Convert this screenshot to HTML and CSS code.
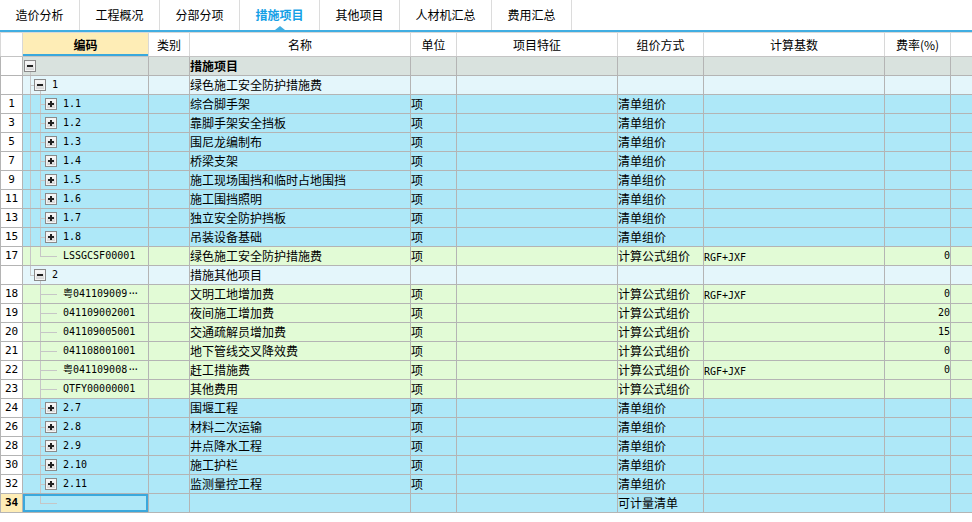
FILE: index.html
```html
<!DOCTYPE html>
<html>
<head>
    <meta charset="utf-8">
    <title>措施项目</title>

    <link rel="stylesheet" href="styles.css">
</head>
<body>
<div class="tabs">
    <div class="tab">造价分析</div>
    <div class="tab">工程概况</div>
    <div class="tab">分部分项</div>
    <div class="tab tab-active">措施项目</div>
    <div class="tab">其他项目</div>
    <div class="tab tab-wide">人材机汇总</div>
    <div class="tab">费用汇总</div>
</div>
<table class="grid">
    <colgroup>
        <col class="w-num">
        <col class="w-code">
        <col class="w-kind">
        <col class="w-name">
        <col class="w-unit">
        <col class="w-feat">
        <col class="w-mode">
        <col class="w-base">
        <col class="w-rate">
        <col class="w-rest">
    </colgroup>
    <thead>
    <tr>
        <th class="num"></th>
        <th class="h-code">编码</th>
        <th>类别</th>
        <th>名称</th>
        <th>单位</th>
        <th>项目特征</th>
        <th>组价方式</th>
        <th>计算基数</th>
        <th>费率(%)</th>
        <th></th>
    </tr>
    </thead>
    <tbody>
    <tr class="r-root">
        <td class="num"></td>
        <td class="t-root"><div class="node node-0"><span class="box"></span></div></td>
        <td></td><td class="txt"><b>措施项目</b></td><td></td><td></td><td></td><td></td><td></td><td></td>
    </tr>
    <tr class="r-group">
        <td class="num"></td>
        <td class="t-g1"><div class="node node-1"><span class="box"></span><span class="code">1</span></div></td>
        <td></td><td class="txt">绿色施工安全防护措施费</td><td></td><td></td><td></td><td></td><td></td><td></td>
    </tr>
    <tr class="r-list">
        <td class="num">1</td>
        <td class="t-l1"><div class="node node-2"><span class="box plus"></span><span class="code">1.1</span></div></td>
        <td></td><td class="txt">综合脚手架</td><td class="txt">项</td><td></td><td class="txt">清单组价</td><td></td><td></td><td></td>
    </tr>
    <tr class="r-list">
        <td class="num">3</td>
        <td class="t-l1"><div class="node node-2"><span class="box plus"></span><span class="code">1.2</span></div></td>
        <td></td><td class="txt">靠脚手架安全挡板</td><td class="txt">项</td><td></td><td class="txt">清单组价</td><td></td><td></td><td></td>
    </tr>
    <tr class="r-list">
        <td class="num">5</td>
        <td class="t-l1"><div class="node node-2"><span class="box plus"></span><span class="code">1.3</span></div></td>
        <td></td><td class="txt">围尼龙编制布</td><td class="txt">项</td><td></td><td class="txt">清单组价</td><td></td><td></td><td></td>
    </tr>
    <tr class="r-list">
        <td class="num">7</td>
        <td class="t-l1"><div class="node node-2"><span class="box plus"></span><span class="code">1.4</span></div></td>
        <td></td><td class="txt">桥梁支架</td><td class="txt">项</td><td></td><td class="txt">清单组价</td><td></td><td></td><td></td>
    </tr>
    <tr class="r-list">
        <td class="num">9</td>
        <td class="t-l1"><div class="node node-2"><span class="box plus"></span><span class="code">1.5</span></div></td>
        <td></td><td class="txt">施工现场围挡和临时占地围挡</td><td class="txt">项</td><td></td><td class="txt">清单组价</td><td></td><td></td><td></td>
    </tr>
    <tr class="r-list">
        <td class="num">11</td>
        <td class="t-l1"><div class="node node-2"><span class="box plus"></span><span class="code">1.6</span></div></td>
        <td></td><td class="txt">施工围挡照明</td><td class="txt">项</td><td></td><td class="txt">清单组价</td><td></td><td></td><td></td>
    </tr>
    <tr class="r-list">
        <td class="num">13</td>
        <td class="t-l1"><div class="node node-2"><span class="box plus"></span><span class="code">1.7</span></div></td>
        <td></td><td class="txt">独立安全防护挡板</td><td class="txt">项</td><td></td><td class="txt">清单组价</td><td></td><td></td><td></td>
    </tr>
    <tr class="r-list">
        <td class="num">15</td>
        <td class="t-l1"><div class="node node-2"><span class="box plus"></span><span class="code">1.8</span></div></td>
        <td></td><td class="txt">吊装设备基础</td><td class="txt">项</td><td></td><td class="txt">清单组价</td><td></td><td></td><td></td>
    </tr>
    <tr class="r-item">
        <td class="num">17</td>
        <td class="t-e1"><div class="node node-leaf"><span class="code">LSSGCSF00001</span></div></td>
        <td></td><td class="txt">绿色施工安全防护措施费</td><td class="txt">项</td><td></td><td class="txt">计算公式组价</td><td class="txt"><span class="code">RGF+JXF</span></td><td class="val">0</td><td></td>
    </tr>
    <tr class="r-group">
        <td class="num"></td>
        <td class="t-g2"><div class="node node-1"><span class="box"></span><span class="code">2</span></div></td>
        <td></td><td class="txt">措施其他项目</td><td></td><td></td><td></td><td></td><td></td><td></td>
    </tr>
    <tr class="r-item">
        <td class="num">18</td>
        <td class="t-i2"><div class="node node-leaf"><span class="code">粤041109009<span class="more">···</span></span></div></td>
        <td></td><td class="txt">文明工地增加费</td><td class="txt">项</td><td></td><td class="txt">计算公式组价</td><td class="txt"><span class="code">RGF+JXF</span></td><td class="val">0</td><td></td>
    </tr>
    <tr class="r-item">
        <td class="num">19</td>
        <td class="t-i2"><div class="node node-leaf"><span class="code">041109002001</span></div></td>
        <td></td><td class="txt">夜间施工增加费</td><td class="txt">项</td><td></td><td class="txt">计算公式组价</td><td></td><td class="val">20</td><td></td>
    </tr>
    <tr class="r-item">
        <td class="num">20</td>
        <td class="t-i2"><div class="node node-leaf"><span class="code">041109005001</span></div></td>
        <td></td><td class="txt">交通疏解员增加费</td><td class="txt">项</td><td></td><td class="txt">计算公式组价</td><td></td><td class="val">15</td><td></td>
    </tr>
    <tr class="r-item">
        <td class="num">21</td>
        <td class="t-i2"><div class="node node-leaf"><span class="code">041108001001</span></div></td>
        <td></td><td class="txt">地下管线交叉降效费</td><td class="txt">项</td><td></td><td class="txt">计算公式组价</td><td></td><td class="val">0</td><td></td>
    </tr>
    <tr class="r-item">
        <td class="num">22</td>
        <td class="t-i2"><div class="node node-leaf"><span class="code">粤041109008<span class="more">···</span></span></div></td>
        <td></td><td class="txt">赶工措施费</td><td class="txt">项</td><td></td><td class="txt">计算公式组价</td><td class="txt"><span class="code">RGF+JXF</span></td><td class="val">0</td><td></td>
    </tr>
    <tr class="r-item">
        <td class="num">23</td>
        <td class="t-i2"><div class="node node-leaf"><span class="code">QTFY00000001</span></div></td>
        <td></td><td class="txt">其他费用</td><td class="txt">项</td><td></td><td class="txt">计算公式组价</td><td></td><td></td><td></td>
    </tr>
    <tr class="r-list">
        <td class="num">24</td>
        <td class="t-l2"><div class="node node-2"><span class="box plus"></span><span class="code">2.7</span></div></td>
        <td></td><td class="txt">围堰工程</td><td class="txt">项</td><td></td><td class="txt">清单组价</td><td></td><td></td><td></td>
    </tr>
    <tr class="r-list">
        <td class="num">26</td>
        <td class="t-l2"><div class="node node-2"><span class="box plus"></span><span class="code">2.8</span></div></td>
        <td></td><td class="txt">材料二次运输</td><td class="txt">项</td><td></td><td class="txt">清单组价</td><td></td><td></td><td></td>
    </tr>
    <tr class="r-list">
        <td class="num">28</td>
        <td class="t-l2"><div class="node node-2"><span class="box plus"></span><span class="code">2.9</span></div></td>
        <td></td><td class="txt">井点降水工程</td><td class="txt">项</td><td></td><td class="txt">清单组价</td><td></td><td></td><td></td>
    </tr>
    <tr class="r-list">
        <td class="num">30</td>
        <td class="t-l2"><div class="node node-2"><span class="box plus"></span><span class="code">2.10</span></div></td>
        <td></td><td class="txt">施工护栏</td><td class="txt">项</td><td></td><td class="txt">清单组价</td><td></td><td></td><td></td>
    </tr>
    <tr class="r-list">
        <td class="num">32</td>
        <td class="t-l2"><div class="node node-2"><span class="box plus"></span><span class="code">2.11</span></div></td>
        <td></td><td class="txt">监测量控工程</td><td class="txt">项</td><td></td><td class="txt">清单组价</td><td></td><td></td><td></td>
    </tr>
    <tr class="r-list">
        <td class="num num-current">34</td>
        <td class="t-e2 selected"><div class="node node-leaf"></div></td>
        <td></td><td></td><td></td><td></td><td class="txt">可计量清单</td><td></td><td></td><td></td>
    </tr>
    </tbody>
</table>
</body>
</html>
```

FILE: styles.css
```css
body {
    margin: 0;
    background: #fff;
    font-family: "Noto Sans CJK SC", sans-serif;
    font-size: 12px;
    color: #000;
    overflow: hidden;
}
.tabs {
    display: flex;
    height: 30px;
    border-bottom: 2px solid #41aee2;
}
.tab {
    position: relative;
    width: 79px;
    border-right: 1px solid #dcdcdc;
    text-align: center;
    line-height: 30px;
}
.tab-wide {
    width: 91px;
}
.tab-active {
    color: #149fe6;
    font-weight: bold;
}
.tab-active::after {
    content: "";
    position: absolute;
    left: 50%;
    bottom: 0;
    margin-left: -5px;
    border: 5px solid transparent;
    border-top: 0;
    border-bottom: 4px solid #41aee2;
}

.grid {
    border-collapse: collapse;
    table-layout: fixed;
    width: 1000px;
}
.w-num { width: 22px; }
.w-code { width: 126px; }
.w-kind { width: 41px; }
.w-name { width: 221px; }
.w-unit { width: 46px; }
.w-feat { width: 161px; }
.w-mode { width: 86px; }
.w-base { width: 181px; }
.w-rate { width: 66px; }
.w-rest { width: 50px; }

.grid th,
.grid td {
    border: 1px solid #b4b4b4;
    padding: 0;
    height: 18px;
    line-height: 18px;
    white-space: nowrap;
    overflow: hidden;
}
.grid th {
    height: 23px;
    font-weight: normal;
    background: #fff;
    border-color: #d8d8d8;
    border-bottom-color: #c4c4c4;
}
.grid th.h-code {
    background: #feedb6;
    font-weight: bold;
    box-shadow: inset 0 -2px 0 #3aa8dc;
}

.r-root { background: #d9e2de; }
.r-group { background: #e4f6fb; }
.r-list { background: #aee8f8; }
.r-item { background: #e2fbd6; }

.grid .num {
    background: #fff;
    text-align: center;
    font-family: "DejaVu Sans Mono", monospace;
    font-size: 11px;
}
.grid .num-current {
    background: #feedb6;
    font-weight: bold;
}
.txt {
    padding-left: 2px;
}
.val {
    text-align: right;
    padding-right: 3px;
    font-family: "DejaVu Sans Mono", monospace;
    font-size: 10px;
}
.code {
    font-family: "DejaVu Sans Mono", "Noto Sans CJK SC", monospace;
    font-size: 10px;
    line-height: 10px;
}
.more {
    letter-spacing: -3px;
}
.selected {
    box-shadow: inset 0 0 0 2px #3aa8dc;
}

/* tree */
.node {
    display: flex;
    align-items: center;
    height: 18px;
}
.node-0 { padding-left: 1px; }
.node-1 { padding-left: 11px; }
.node-2 { padding-left: 22px; }
.node-leaf { padding-left: 40px; }
.node .box + .code {
    margin-left: 6px;
}
.box {
    position: relative;
    flex: none;
    width: 12px;
    height: 12px;
    box-sizing: border-box;
    border: 1px solid #8a8a8a;
    background: linear-gradient(#fefefe, #d2d2d2);
    box-shadow: inset 0 0 0 1px #f4f4f4;
}
.box::before {
    content: "";
    position: absolute;
    left: 2px;
    right: 2px;
    top: 4px;
    height: 2px;
    background: #222;
}
.box.plus::after {
    content: "";
    position: absolute;
    top: 2px;
    bottom: 2px;
    left: 4px;
    width: 2px;
    background: #222;
}

.t-root {
    background: linear-gradient(#c6c6c6, #c6c6c6) 7px 100% / 1px 50% no-repeat;
}
.t-g1 {
    background:
        linear-gradient(#c6c6c6, #c6c6c6) 7px 0 / 1px 100% no-repeat,
        linear-gradient(#c6c6c6, #c6c6c6) 7px 50% / 5px 1px no-repeat,
        linear-gradient(#c6c6c6, #c6c6c6) 17px 100% / 1px 50% no-repeat;
}
.t-l1 {
    background:
        linear-gradient(#c6c6c6, #c6c6c6) 7px 0 / 1px 100% no-repeat,
        linear-gradient(#c6c6c6, #c6c6c6) 17px 0 / 1px 100% no-repeat,
        linear-gradient(#c6c6c6, #c6c6c6) 17px 50% / 6px 1px no-repeat;
}
.t-e1 {
    background:
        linear-gradient(#c6c6c6, #c6c6c6) 7px 0 / 1px 100% no-repeat,
        linear-gradient(#c6c6c6, #c6c6c6) 17px 0 / 1px 50% no-repeat,
        linear-gradient(#c6c6c6, #c6c6c6) 17px 50% / 17px 1px no-repeat;
}
.t-g2 {
    background:
        linear-gradient(#c6c6c6, #c6c6c6) 7px 0 / 1px 50% no-repeat,
        linear-gradient(#c6c6c6, #c6c6c6) 7px 50% / 5px 1px no-repeat,
        linear-gradient(#c6c6c6, #c6c6c6) 17px 100% / 1px 50% no-repeat;
}
.t-i2 {
    background:
        linear-gradient(#c6c6c6, #c6c6c6) 17px 0 / 1px 100% no-repeat,
        linear-gradient(#c6c6c6, #c6c6c6) 17px 50% / 17px 1px no-repeat;
}
.t-l2 {
    background:
        linear-gradient(#c6c6c6, #c6c6c6) 17px 0 / 1px 100% no-repeat,
        linear-gradient(#c6c6c6, #c6c6c6) 17px 50% / 6px 1px no-repeat;
}
.t-e2 {
    background:
        linear-gradient(#c6c6c6, #c6c6c6) 17px 0 / 1px 50% no-repeat,
        linear-gradient(#c6c6c6, #c6c6c6) 17px 50% / 17px 1px no-repeat;
}
```
